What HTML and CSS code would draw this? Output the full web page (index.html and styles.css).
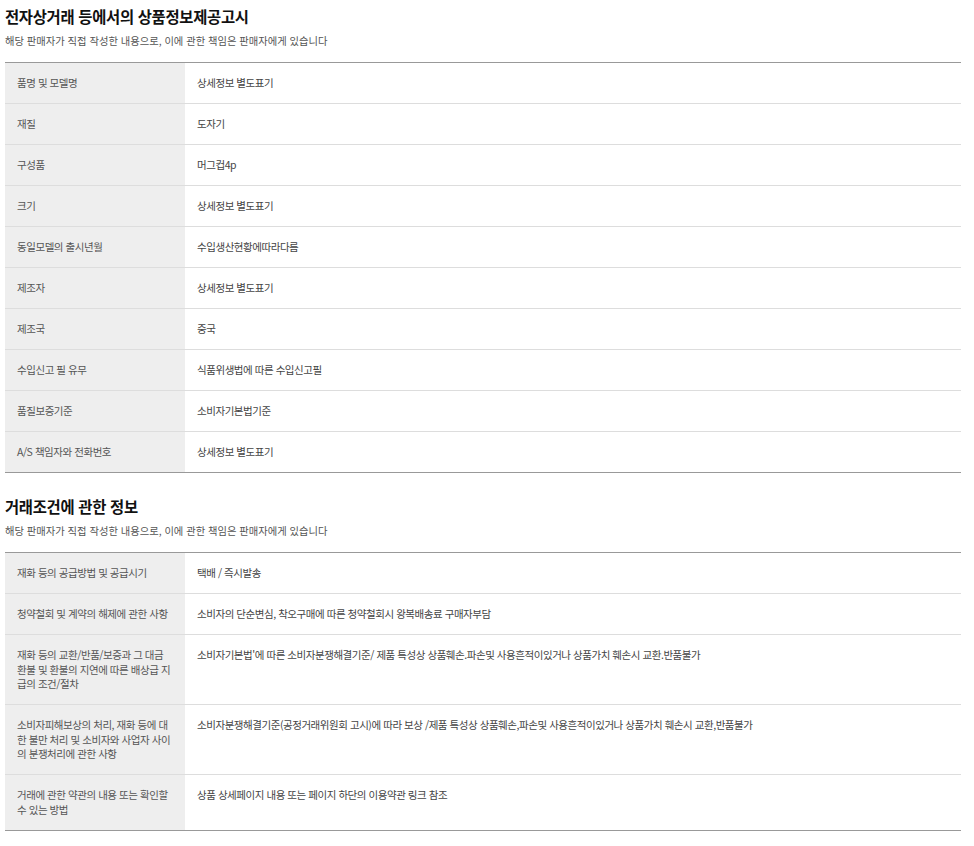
FILE: index.html
```html
<!DOCTYPE html>
<html lang="ko">
<head>
    <meta charset="UTF-8">
    <meta name="viewport" content="width=device-width, initial-scale=1.0">
    <title>상품정보제공고시</title>
    <link rel="stylesheet" href="styles.css">
</head>
<body>
    <div class="container">
        <section class="info-section">
            <h2 class="section-title">전자상거래 등에서의 상품정보제공고시</h2>
            <p class="section-desc">해당 판매자가 직접 작성한 내용으로, 이에 관한 책임은 판매자에게 있습니다</p>
            <table class="info-table">
                <tr><th>품명 및 모델명</th><td>상세정보 별도표기</td></tr>
                <tr><th>재질</th><td>도자기</td></tr>
                <tr><th>구성품</th><td>머그컵4p</td></tr>
                <tr><th>크기</th><td>상세정보 별도표기</td></tr>
                <tr><th>동일모델의 출시년월</th><td>수입생산현황에따라다름</td></tr>
                <tr><th>제조자</th><td>상세정보 별도표기</td></tr>
                <tr><th>제조국</th><td>중국</td></tr>
                <tr><th>수입신고 필 유무</th><td>식품위생법에 따른 수입신고필</td></tr>
                <tr><th>품질보증기준</th><td>소비자기본법기준</td></tr>
                <tr><th>A/S 책임자와 전화번호</th><td>상세정보 별도표기</td></tr>
            </table>
        </section>

        <section class="info-section">
            <h2 class="section-title">거래조건에 관한 정보</h2>
            <p class="section-desc">해당 판매자가 직접 작성한 내용으로, 이에 관한 책임은 판매자에게 있습니다</p>
            <table class="info-table">
                <tr><th>재화 등의 공급방법 및 공급시기</th><td>택배 / 즉시발송</td></tr>
                <tr><th>청약철회 및 계약의 해제에 관한 사항</th><td>소비자의 단순변심, 착오구매에 따른 청약철회시 왕복배송료 구매자부담</td></tr>
                <tr><th>재화 등의 교환/반품/보증과 그 대금 환불 및 환불의 지연에 따른 배상급 지급의 조건/절차</th><td>소비자기본법'에 따른 소비자분쟁해결기준/ 제품 특성상 상품훼손.파손및 사용흔적이있거나 상품가치 훼손시 교환.반품불가</td></tr>
                <tr><th>소비자피해보상의 처리, 재화 등에 대한 불만 처리 및 소비자와 사업자 사이의 분쟁처리에 관한 사항</th><td>소비자분쟁해결기준(공정거래위원회 고시)에 따라 보상 /제품 특성상 상품훼손,파손및 사용흔적이있거나 상품가치 훼손시 교환,반품불가</td></tr>
                <tr><th>거래에 관한 약관의 내용 또는 확인할 수 있는 방법</th><td>상품 상세페이지 내용 또는 페이지 하단의 이용약관 링크 참조</td></tr>
            </table>
        </section>
    </div>
</body>
</html>
```

FILE: styles.css
```css
* {
    margin: 0;
    padding: 0;
    box-sizing: border-box;
}

body {
    font-family: 'Noto Sans CJK KR', 'Noto Sans', sans-serif;
    background: #fff;
    color: #444;
}

.container {
    width: 956px;
    margin-left: 5px;
    padding-top: 5px;
}

.info-section + .info-section {
    margin-top: 22px;
}

.section-title {
    font-size: 15.4px;
    font-weight: 700;
    color: #111;
    line-height: 22px;
    letter-spacing: -0.3px;
}

.section-desc {
    font-size: 10.3px;
    color: #555;
    line-height: 14px;
    margin-top: 7px;
}

.info-table {
    width: 100%;
    margin-top: 14px;
    border-collapse: collapse;
    border-top: 1px solid #999;
}

.info-table th,
.info-table td {
    font-size: 10.5px;
    font-weight: 400;
    line-height: 14.5px;
    letter-spacing: -0.45px;
    text-align: left;
    vertical-align: top;
    padding: 13px 12px 12.5px 12px;
    border-bottom: 1px solid #ddd;
}

.info-table tr:last-child th,
.info-table tr:last-child td {
    border-bottom-color: #999;
}

.info-table th {
    width: 180px;
    background: #eee;
    color: #555;
    padding-left: 12px;
    padding-right: 13px;
}

.info-table td {
    color: #444;
}
```
